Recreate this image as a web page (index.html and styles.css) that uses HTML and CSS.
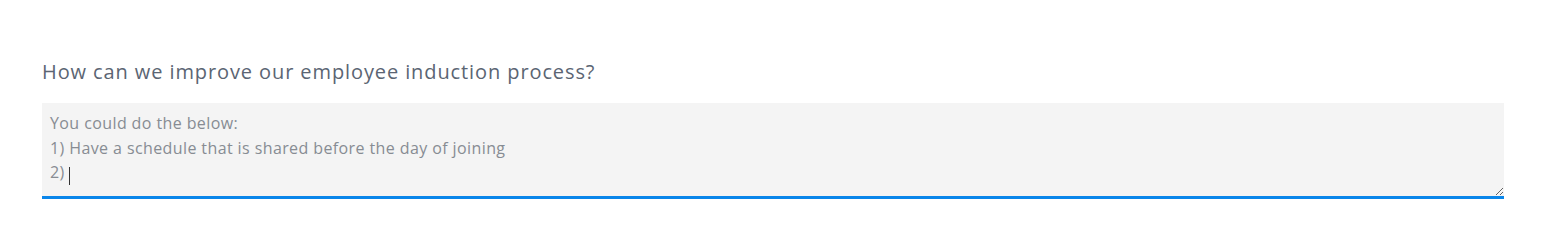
FILE: index.html
```html
<!DOCTYPE html>
<html lang="en">
<head>
    <meta charset="UTF-8">
    <meta name="viewport" content="width=device-width, initial-scale=1.0">
    <title>Feedback</title>
    <link rel="stylesheet" href="styles.css">
</head>
<body>
    <div class="question">
        <label class="question-label" for="answer">How can we improve our employee induction process?</label>
        <div class="answer-wrap">
            <textarea class="answer" id="answer" rows="3">You could do the below:
1) Have a schedule that is shared before the day of joining
2)</textarea>
            <span class="caret"></span>
        </div>
    </div>

    <script>
        const answer = document.getElementById('answer');
        answer.focus();
        answer.setSelectionRange(answer.value.length, answer.value.length);
    </script>
</body>
</html>
```

FILE: styles.css
```css
body {
    font-family: 'Open Sans', 'Noto Sans', sans-serif;
    margin: 0;
    background: #fff;
}
.question {
    padding: 58px 46px 0 42px;
}
.question-label {
    display: block;
    font-size: 20px;
    line-height: 28px;
    letter-spacing: 0.9px;
    color: #5b6573;
    margin-bottom: 17px;
}
.answer-wrap {
    position: relative;
}
.answer {
    display: block;
    box-sizing: border-box;
    width: 100%;
    height: 96px;
    margin: 0;
    padding: 8px 8px 0 8px;
    border: none;
    border-bottom: 3px solid #0a86ea;
    border-radius: 0;
    background: #f4f4f4;
    color: #878c93;
    font-family: inherit;
    font-size: 16px;
    line-height: 24.5px;
    letter-spacing: 0.4px;
    outline: none;
    resize: vertical;
    caret-color: transparent;
}
/* caret of the focused field */
.caret {
    position: absolute;
    left: 27px;
    top: 64px;
    width: 1px;
    height: 18px;
    background: #333;
}
```
